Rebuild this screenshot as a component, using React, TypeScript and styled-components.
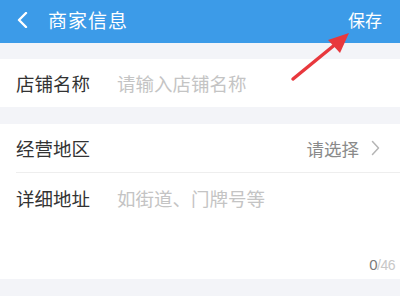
import React from 'react'
import styled, { createGlobalStyle } from 'styled-components'

const GlobalStyle = createGlobalStyle`
  html, body {
    margin: 0;
    padding: 0;
    background: #ffffff;
    font-family: "Noto Sans CJK SC", "Noto Sans", sans-serif;
  }
  #root {
    width: 400px;
    height: 300px;
    overflow: hidden;
  }
`

const Screen = styled.div`
  position: relative;
  width: 400px;
  height: 300px;
  background: #ffffff;
`

const Header = styled.header`
  height: 43px;
  background: #3c9be8;
  display: flex;
  align-items: center;
  padding: 0 18px 0 16px;
  color: #ffffff;
`

const Back = styled.svg`
  width: 12px;
  height: 16px;
  margin-right: 20px;
  margin-top: -4px;
`

const Title = styled.div`
  font-size: 19px;
  flex: 1;
  margin-top: -4px;
  letter-spacing: 1px;
`

const Save = styled.div`
  font-size: 17px;
  margin-top: -4px;
`

const Gap = styled.div<{ $h: number }>`
  height: ${(p) => p.$h}px;
  background: #f3f4f8;
`

const Row = styled.div`
  height: 48px;
  display: flex;
  align-items: center;
  padding: 0 16px;
`

const Label = styled.div`
  width: 101px;
  font-size: 18.5px;
  color: #333333;
`

const Placeholder = styled.div`
  font-size: 18.5px;
  color: #c4c4c4;
  flex: 1;
`

const Value = styled.div`
  font-size: 17.5px;
  color: #8a8a8a;
  display: flex;
  align-items: center;
  gap: 12px;
  margin-right: 4px;
`

const Divider = styled.div`
  height: 1px;
  background: #eeeeee;
  margin-left: 16px;
`

const AddressBlock = styled.div`
  height: 106px;
  display: flex;
  flex-direction: column;
  padding: 13px 5px 0 16px;
  box-sizing: border-box;
`

const AddressLine = styled.div`
  display: flex;
  align-items: center;
  height: 24px;
`

const Counter = styled.div`
  margin-top: auto;
  margin-bottom: 6px;
  align-self: flex-end;
  font-family: "Liberation Sans", Arial, sans-serif;
  font-size: 14px;
  color: #c8c8c8;
  letter-spacing: -0.5px;
  b {
    font-weight: normal;
    font-size: 15px;
    color: #7a7a7a;
  }
`

const Arrow = styled.svg`
  position: absolute;
  left: 285px;
  top: 26px;
  width: 70px;
  height: 60px;
  pointer-events: none;
`

const App: React.FC = () => (
  <Screen>
    <GlobalStyle />
    <Header>
      <Back viewBox="0 0 12 16">
        <path d="M10 1 L3 8 L10 15" fill="none" stroke="#fff" strokeWidth="2.4" strokeLinecap="round" strokeLinejoin="round" />
      </Back>
      <Title>商家信息</Title>
      <Save>保存</Save>
    </Header>
    <Gap $h={16} />
    <Row>
      <Label>店铺名称</Label>
      <Placeholder>请输入店铺名称</Placeholder>
    </Row>
    <Gap $h={17} />
    <Row>
      <Label>经营地区</Label>
      <Placeholder />
      <Value>
        请选择
        <svg width="9" height="16" viewBox="0 0 9 16">
          <path d="M1.5 1.5 L7.5 8 L1.5 14.5" fill="none" stroke="#b5b5b5" strokeWidth="1.5" strokeLinecap="round" strokeLinejoin="round" />
        </svg>
      </Value>
    </Row>
    <Divider />
    <AddressBlock>
      <AddressLine>
        <Label>详细地址</Label>
        <Placeholder>如街道、门牌号等</Placeholder>
      </AddressLine>
      <Counter>
        <b>0</b>/46
      </Counter>
    </AddressBlock>
    <Gap $h={17} />
    <Arrow viewBox="0 0 70 60">
      <line x1="8" y1="53" x2="52" y2="17" stroke="#e8383d" strokeWidth="3.5" strokeLinecap="round" />
      <polygon points="64,7 43,14 55,27" fill="#e8383d" />
    </Arrow>
  </Screen>
)

export default App
